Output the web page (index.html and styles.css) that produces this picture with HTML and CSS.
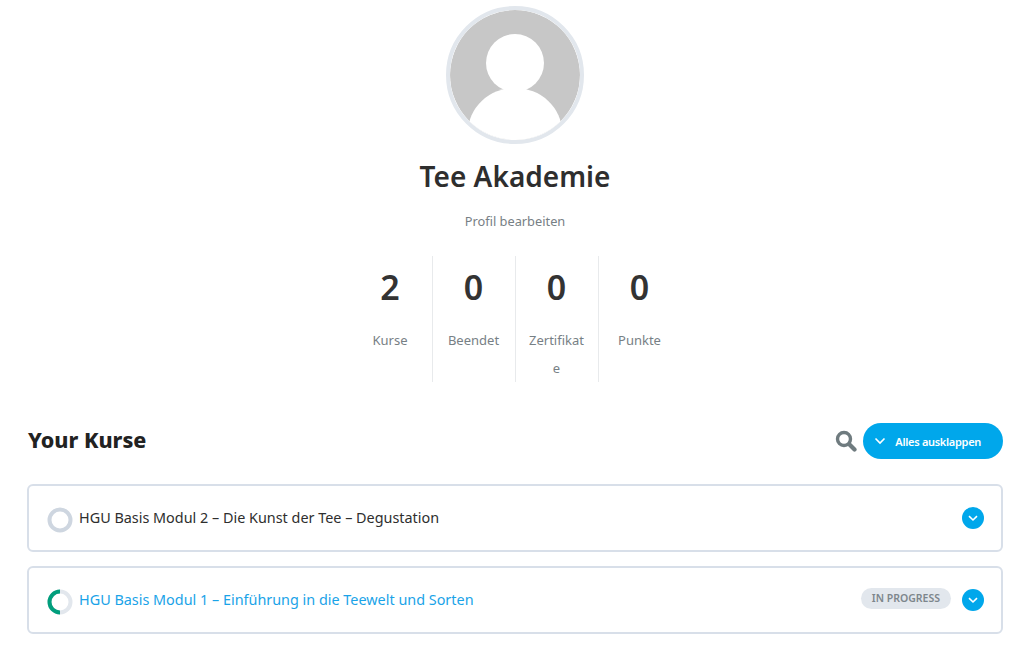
FILE: index.html
```html
<!DOCTYPE html>
<html lang="de">
<head>
    <meta charset="UTF-8">
    <title>Profil</title>
    <link rel="stylesheet" href="styles.css">
</head>
<body>
    <div class="container">
        <div class="profile">
            <div class="avatar">
                <svg width="130" height="130" viewBox="0 0 130 130">
                    <circle cx="65" cy="65" r="65" fill="#c7c7c7"/>
                    <circle cx="65" cy="53" r="29" fill="#fff"/>
                    <ellipse cx="65" cy="122" rx="47" ry="44" fill="#fff"/>
                </svg>
            </div>
            <h1 class="name">Tee Akademie</h1>
            <a class="edit-link" href="#">Profil bearbeiten</a>
        </div>

        <div class="stats">
            <div class="stat">
                <div class="stat-num">2</div>
                <div class="stat-label">Kurse</div>
            </div>
            <div class="stat">
                <div class="stat-num">0</div>
                <div class="stat-label">Beendet</div>
            </div>
            <div class="stat">
                <div class="stat-num">0</div>
                <div class="stat-label">Zertifikate</div>
            </div>
            <div class="stat">
                <div class="stat-num">0</div>
                <div class="stat-label">Punkte</div>
            </div>
        </div>

        <div class="courses-head">
            <h2>Your Kurse</h2>
            <div class="courses-tools">
                <svg class="search-icon" width="22" height="22" viewBox="0 0 22 22">
                    <circle cx="9" cy="9" r="6.5" fill="none" stroke="#6f7b7f" stroke-width="3.4"/>
                    <path d="M14.5 14.5l5 5" stroke="#6f7b7f" stroke-width="4.2" stroke-linecap="round"/>
                </svg>
                <button class="expand-all">
                    <svg width="12" height="8" viewBox="0 0 12 8"><path d="M1.5 1.5L6 6l4.5-4.5" fill="none" stroke="#fff" stroke-width="1.6"/></svg>
                    Alles ausklappen
                </button>
            </div>
        </div>

        <div class="course">
            <svg class="ring" width="26" height="26" viewBox="0 0 26 26">
                <circle cx="13" cy="13" r="10.5" fill="none" stroke="#ced6e0" stroke-width="4"/>
            </svg>
            <span class="course-title">HGU Basis Modul 2 – Die Kunst der Tee – Degustation</span>
            <span class="toggle"><svg width="10" height="7" viewBox="0 0 10 7"><path d="M1 1.2L5 5l4-3.8" fill="none" stroke="#fff" stroke-width="1.6"/></svg></span>
        </div>

        <div class="course">
            <svg class="ring" width="26" height="26" viewBox="0 0 26 26">
                <circle cx="13" cy="13" r="10.5" fill="none" stroke="#e2e7ed" stroke-width="4"/>
                <path d="M13 2.5a10.5 10.5 0 0 0 0 21" fill="none" stroke="#019e7c" stroke-width="4"/>
            </svg>
            <span class="course-title active">HGU Basis Modul 1 – Einführung in die Teewelt und Sorten</span>
            <span class="badge">IN PROGRESS</span>
            <span class="toggle"><svg width="10" height="7" viewBox="0 0 10 7"><path d="M1 1.2L5 5l4-3.8" fill="none" stroke="#fff" stroke-width="1.6"/></svg></span>
        </div>
    </div>
</body>
</html>
```

FILE: styles.css
```css
body {
    margin: 0;
    background: #fff;
    font-family: "Noto Sans", "Open Sans", Arial, sans-serif;
    color: #2e2e2e;
}
.container {
    padding: 6px 21px 0 27px;
}
.profile {
    display: flex;
    flex-direction: column;
    align-items: center;
}
.avatar {
    width: 130px;
    height: 130px;
    border: 4px solid #e2e7ed;
    border-radius: 50%;
    overflow: hidden;
}
.avatar svg {
    display: block;
}
.name {
    margin: 12px 0 0;
    font-size: 28px;
    line-height: 40px;
    font-weight: 600;
}
.edit-link {
    margin-top: 15px;
    font-size: 12.8px;
    line-height: 20px;
    color: #778085;
    text-decoration: none;
}
.stats {
    display: flex;
    justify-content: center;
    margin-top: 25px;
}
.stat {
    box-sizing: border-box;
    width: 83px;
    height: 126px;
    padding: 9px 13px 0 12px;
    text-align: center;
    border-left: 1px solid #e8eaec;
}
.stat:first-child {
    border-left: none;
}
.stat-num {
    font-size: 34px;
    line-height: 44px;
    font-weight: 600;
    color: #333;
}
.stat-label {
    margin-top: 17px;
    font-size: 13px;
    line-height: 28px;
    color: #778085;
    word-break: break-all;
}
.courses-head {
    display: flex;
    justify-content: space-between;
    align-items: center;
    margin-top: 41px;
    margin-bottom: 25px;
}
.courses-head h2 {
    margin: 0 0 0 1px;
    padding-bottom: 2px;
    font-size: 21.5px;
    line-height: 30px;
    font-weight: 800;
    color: #222;
}
.courses-tools {
    display: flex;
    align-items: center;
    gap: 6px;
}
.expand-all {
    display: flex;
    align-items: center;
    gap: 9px;
    height: 36px;
    padding: 0 22px 0 11px;
    border: none;
    border-radius: 18px;
    background: #00a7eb;
    color: #fff;
    font-family: inherit;
    font-size: 11px;
    font-weight: 600;
    letter-spacing: -0.3px;
}
.course {
    display: flex;
    align-items: center;
    box-sizing: border-box;
    height: 68px;
    margin-bottom: 14px;
    padding: 0 17px 0 18px;
    border: 2px solid #d8dfe9;
    border-radius: 6px;
}
.ring {
    flex: none;
    margin: 3px 6px 0 0;
}
.course-title {
    flex: 1;
    margin-bottom: 2px;
    font-size: 14.4px;
    color: #2e2e2e;
}
.course-title.active {
    color: #1aa3e8;
}
.badge {
    margin: 0 11px 3px 0;
    padding: 0 11px;
    border-radius: 11px;
    background: #e2e7ed;
    color: #7d868c;
    font-size: 10.5px;
    line-height: 21px;
    font-weight: 600;
}
.toggle {
    display: flex;
    align-items: center;
    justify-content: center;
    width: 22px;
    height: 22px;
    border-radius: 50%;
    background: #00a7eb;
}
```
